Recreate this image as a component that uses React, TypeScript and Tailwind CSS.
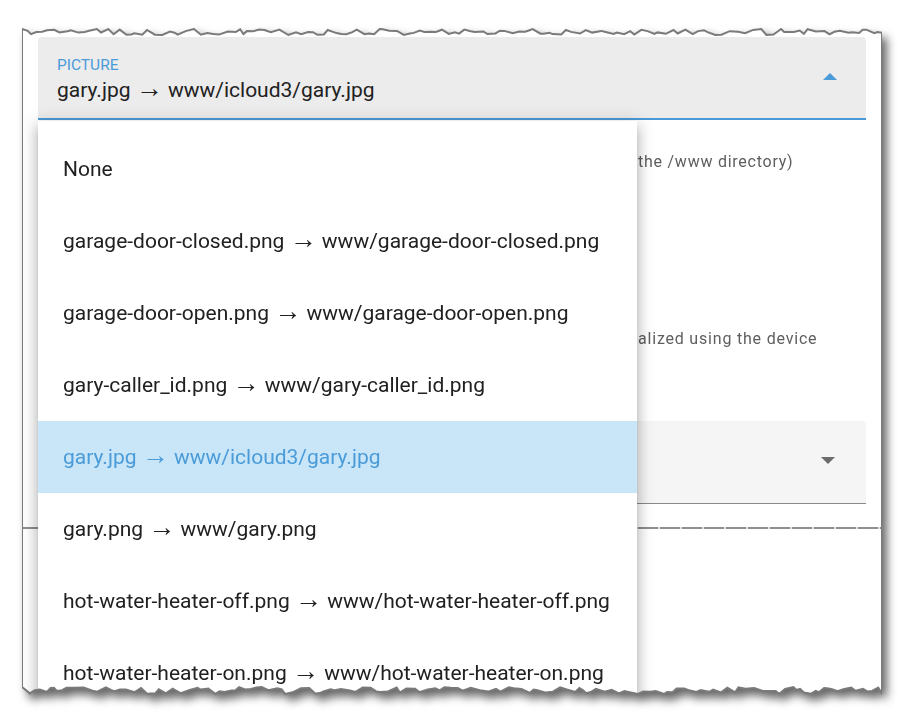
import React from 'react';

const FRAME_W = 860;
const FRAME_H = 668;

// small seeded generator so the torn edge looks the same every render
function seeded(seed: number) {
  let s = seed;
  return () => {
    s = (s * 16807) % 2147483647;
    return (s - 1) / 2147483646;
  };
}

function tornEdge(seed: number, base: number, depth: number) {
  const next = seeded(seed);
  const pts: [number, number][] = [];
  let x = 0;
  while (x < FRAME_W) {
    pts.push([x, base + next() * depth]);
    x += 3 + next() * 6;
  }
  pts.push([FRAME_W, base + next() * depth]);
  return pts;
}

const topEdge = tornEdge(11, 1, 6);
const bottomEdge = tornEdge(29, FRAME_H - 9, 7);
const outline = [...topEdge, ...[...bottomEdge].reverse()];
const clipPolygon = `polygon(${outline.map(([x, y]) => `${x.toFixed(1)}px ${y.toFixed(1)}px`).join(', ')})`;
const outlinePoints = outline.map(([x, y]) => `${x.toFixed(1)},${y.toFixed(1)}`).join(' ');

interface PictureOption {
  file: string;
  path?: string;
}

const options: PictureOption[] = [
  { file: 'None' },
  { file: 'garage-door-closed.png', path: 'www/garage-door-closed.png' },
  { file: 'garage-door-open.png', path: 'www/garage-door-open.png' },
  { file: 'gary-caller_id.png', path: 'www/gary-caller_id.png' },
  { file: 'gary.jpg', path: 'www/icloud3/gary.jpg' },
  { file: 'gary.png', path: 'www/gary.png' },
  { file: 'hot-water-heater-off.png', path: 'www/hot-water-heater-off.png' },
  { file: 'hot-water-heater-on.png', path: 'www/hot-water-heater-on.png' },
  { file: 'hot-water-heater.png', path: 'www/hot-water-heater.png' },
];

const selected = 'gary.jpg';

// the arrow in the source is long and thin, so it is set larger than the text
// (zero line-height keeps it from growing the line box)
function Arrow() {
  return (
    <span className="font-['Liberation_Sans',sans-serif] text-[27px] leading-[0px]">
      {'\u2192'}
    </span>
  );
}

function OptionLabel({ o }: { o: PictureOption }) {
  if (!o.path) return <>{o.file}</>;
  return (
    <>
      {o.file} <Arrow /> {o.path}
    </>
  );
}

export default function App() {
  return (
    <div className="w-[904px] h-[726px] bg-white overflow-hidden pl-[22px] pt-[28px] font-['Roboto','Liberation_Sans',sans-serif]">
      <div className="relative w-[860px] h-[668px] drop-shadow-[5px_6px_5px_rgba(0,0,0,0.6)]">
        <div
          className="relative h-full bg-white px-[16px] pt-[9px]"
          style={{ clipPath: clipPolygon }}
        >
          {/* Picture select (open) */}
          <div className="flex items-center justify-between h-[83px] bg-[#ececec] rounded-t-[4px] border-b-2 border-[#4b9ad7] pl-[19px] pr-[29px]">
            <div className="flex flex-col pt-[3px]">
              <span className="text-[15.5px] leading-[18px] text-[#4a9bd8] uppercase">Picture</span>
              <span className="mt-[4px] text-[21px] leading-[24px] text-[#212121] whitespace-nowrap">
                gary.jpg <Arrow /> www/icloud3/gary.jpg
              </span>
            </div>
            <svg width="14" height="7" viewBox="0 0 14 7" className="mb-[2px]">
              <polygon points="0,7 7,0 14,7" fill="#4a9bd8" />
            </svg>
          </div>

          {/* Form content behind the menu */}
          <p className="mt-[30px] text-[16px] leading-[24px] tracking-[0.75px] text-[#5e5e5e] whitespace-nowrap">
            <span className="inline-block w-[600px] overflow-hidden align-bottom">
              Select the picture displayed for the device (the file must be in
            </span>
            the /www directory)
          </p>
          <p className="mt-[153px] text-[16px] leading-[24px] tracking-[0.8px] text-[#5e5e5e] whitespace-nowrap">
            <span className="inline-block w-[600px] overflow-hidden align-bottom">
              The device name and picture are the defaults and can be person
            </span>
            alized using the device
          </p>

          <div className="mt-[70px] flex items-center justify-end h-[83px] bg-[#f5f5f5] rounded-t-[4px] border-b border-[#8a8a8a] pr-[31px]">
            <svg width="14" height="7" viewBox="0 0 14 7" className="mb-[4px]">
              <polygon points="0,0 14,0 7,7" fill="#6b6b6b" />
            </svg>
          </div>

          <div className="mt-[23px] -mx-[16px] h-[2px] bg-[repeating-linear-gradient(90deg,#8f8f8f_0px,#8f8f8f_20px,#dcdcdc_20px,#dcdcdc_22px)]" />

          {/* Dropdown menu */}
          <div className="absolute left-[16px] top-[93px] w-[599px] bg-white pt-[12px] shadow-[0_5px_6px_-3px_rgba(0,0,0,0.22),0_8px_12px_1px_rgba(0,0,0,0.16),0_3px_16px_3px_rgba(0,0,0,0.14)]">
            {options.map((o) => {
              const isSel = o.file === selected;
              return (
                <div
                  key={o.file}
                  className={`flex items-center h-[72px] pl-[25px] text-[21px] leading-[24px] whitespace-nowrap ${
                    isSel ? 'bg-[#c9e6f9] text-[#4a9bd8]' : 'text-[#212121]'
                  }`}
                >
                  <span>
                    <OptionLabel o={o} />
                  </span>
                </div>
              );
            })}
          </div>
        </div>

        {/* torn paper outline */}
        <svg
          className="absolute inset-0 pointer-events-none"
          width={FRAME_W}
          height={FRAME_H}
          viewBox={`0 0 ${FRAME_W} ${FRAME_H}`}
        >
          <polygon points={outlinePoints} fill="none" stroke="#7a7a7a" strokeWidth="2" />
        </svg>
      </div>
    </div>
  );
}
